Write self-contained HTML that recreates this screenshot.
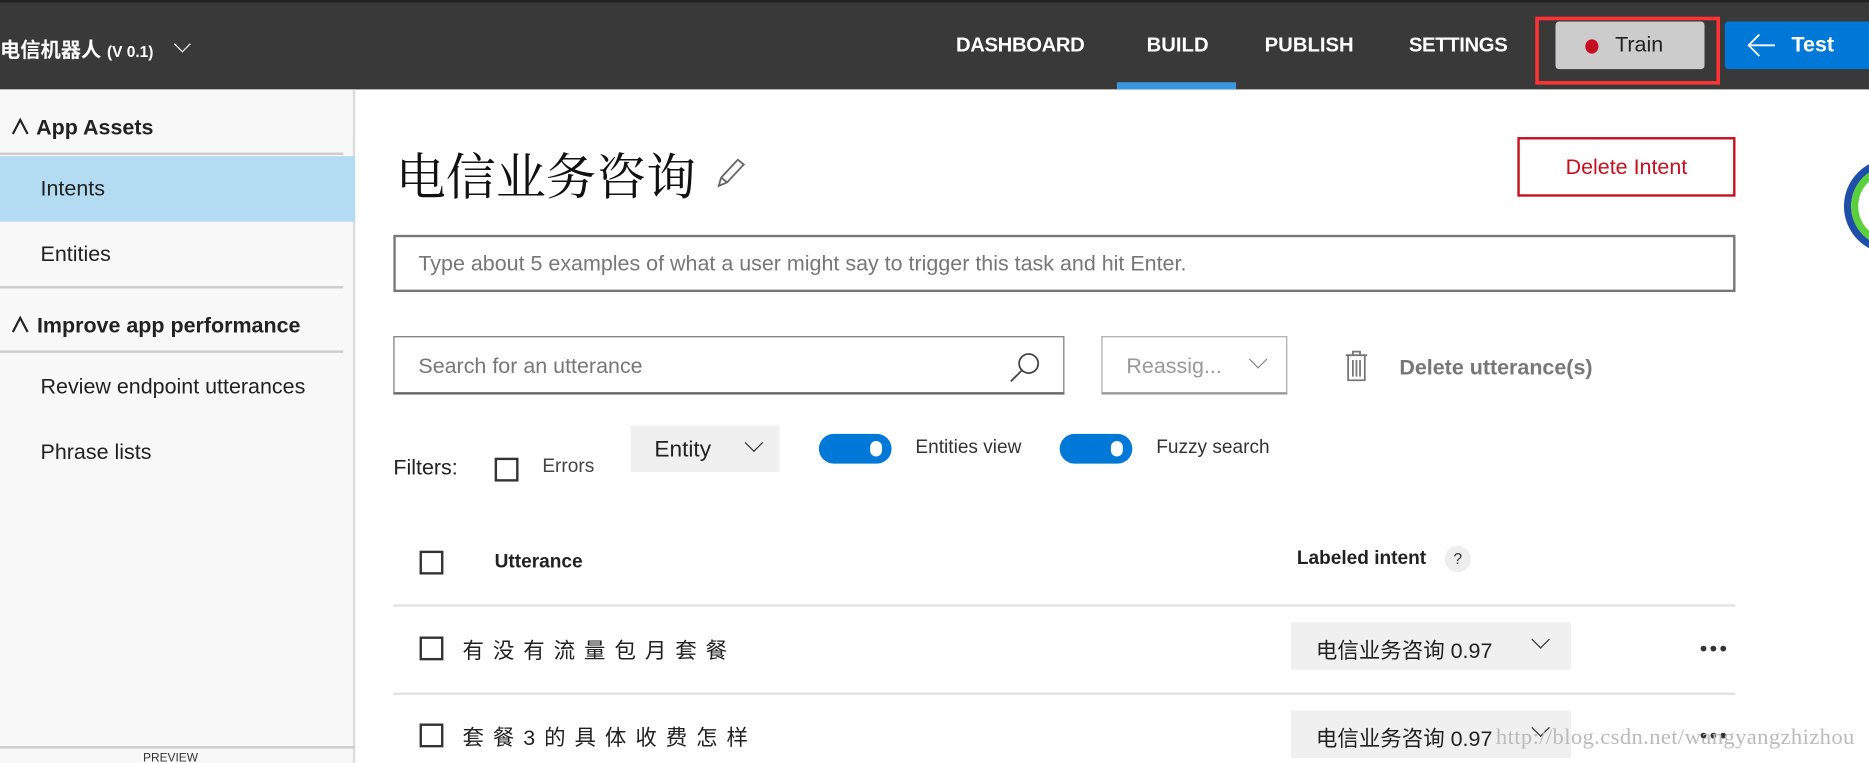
<!DOCTYPE html>
<html><head><meta charset="utf-8"><style>
*{margin:0;padding:0;box-sizing:border-box}
body{width:1869px;height:763px;overflow:hidden;background:#fff;font-family:"Liberation Sans","Noto Sans CJK SC",sans-serif}
#w{position:absolute;left:0;top:0;width:1568px;height:640px;transform:scale(1.19196);transform-origin:0 0;overflow:hidden}
.a{position:absolute;white-space:nowrap}
.top{left:0;top:0;width:1568px;height:75px;background:#393939;border-top:2px solid #222}
.nav{color:#fff;font-size:17px;top:28px;font-weight:600}
.sb{left:0;top:75px;width:298px;height:565px;background:#f8f8f8;border-right:2px solid #ddd}
.si{font-size:18px;color:#222}
.hd{font-weight:700}
.cb{width:20px;height:20px;border:2px solid #333;background:#fff}
.dd{background:#f0f0f0}
.tg{width:61px;height:25px;border-radius:13px;background:#0078d7}
.tg:after{content:"";position:absolute;right:8px;top:6px;width:10px;height:13px;border-radius:6px;background:#fff}
.line{left:330px;width:1126px;height:2px;background:#e3e3e3}
.chev{width:11px;height:11px;border-right:1.5px solid #333;border-bottom:1.5px solid #333;transform:rotate(45deg)}
</style></head><body><div id="w">
<div class="a top"></div>
<div class="a" style="left:0;top:28px;color:#fff;font-size:17px;font-weight:700">电信机器人 <span style="font-size:13px">(V 0.1)</span></div>
<div class="a chev" style="left:148px;top:32px;border-color:#fff;width:10px;height:10px"></div>
<div class="a nav" style="left:802px;letter-spacing:-0.3px">DASHBOARD</div>
<div class="a nav" style="left:962px">BUILD</div>
<div class="a nav" style="left:1061px">PUBLISH</div>
<div class="a nav" style="left:1182px;letter-spacing:-0.3px">SETTINGS</div>
<div class="a" style="left:937px;top:69px;width:100px;height:6px;background:#3a96dd"></div>
<div class="a" style="left:1288px;top:14px;width:155px;height:57px;border:3px solid #f33"></div>
<div class="a" style="left:1305px;top:18px;width:125px;height:40px;background:#ccc;border-radius:3px"></div>
<div class="a" style="left:1330px;top:33px;width:11px;height:12px;border-radius:50%;background:#c50f1f"></div>
<div class="a" style="left:1355px;top:27px;font-size:18px;color:#222">Train</div>
<div class="a" style="left:1447px;top:18px;width:130px;height:40px;background:#0078d7;border-radius:3px"></div>
<svg class="a" style="left:1465px;top:27px" width="26" height="22"><path d="M24 11H3M11 2L2 11l9 9" fill="none" stroke="#fff" stroke-width="1.5"/></svg>
<div class="a" style="left:1503px;top:27px;font-size:18px;color:#fff;font-weight:600">Test</div>

<div class="a sb"></div>
<div class="a" style="left:0;top:128px;width:288px;height:2px;background:#ccc"></div>
<div class="a" style="left:0;top:131px;width:298px;height:55px;background:#b3dcf2"></div>
<div class="a" style="left:0;top:240px;width:288px;height:2px;background:#ccc"></div>
<div class="a" style="left:0;top:294px;width:288px;height:2px;background:#ccc"></div>
<div class="a si hd" style="left:8px;top:93px">∧ App Assets</div>
<div class="a si" style="left:34px;top:148px">Intents</div>
<div class="a si" style="left:34px;top:203px">Entities</div>
<div class="a si hd" style="left:8px;top:259px">∧ Improve app performance</div>
<div class="a si" style="left:34px;top:314px">Review endpoint utterances</div>
<div class="a si" style="left:34px;top:369px">Phrase lists</div>
<div class="a" style="left:0;top:626px;width:298px;height:2px;background:#ccc"></div>
<div class="a" style="left:120px;top:631px;font-size:10px;color:#333">PREVIEW</div>

<div class="a" style="left:332px;top:116px;font-size:42px;color:#111;font-family:'Noto Serif CJK SC',serif">电信业务咨询</div>
<svg class="a" style="left:600px;top:131px" width="26" height="28" viewBox="0 0 26 28"><path d="M3 25l2-7L19 3l5 4-14 15z M5 18l5 4" fill="none" stroke="#666" stroke-width="1.5"/></svg>
<div class="a" style="left:1273px;top:115px;width:183px;height:50px;border:2px solid #c50f1f;color:#c50f1f;font-size:18px;text-align:center;line-height:46px">Delete Intent</div>
<div class="a" style="left:330px;top:197px;width:1126px;height:48px;border:2px solid #777;color:#777;font-size:18px;padding:12px 19px">Type about 5 examples of what a user might say to trigger this task and hit Enter.</div>

<div class="a" style="left:330px;top:282px;width:563px;height:49px;border:1px solid #777;border-bottom:2px solid #666;color:#777;font-size:18px;padding:14px 20px">Search for an utterance</div>
<svg class="a" style="left:845px;top:293px" width="30" height="30"><circle cx="18" cy="12" r="8" fill="none" stroke="#444" stroke-width="1.5"/><path d="M12 18L3 27" stroke="#444" stroke-width="1.5"/></svg>
<div class="a" style="left:924px;top:282px;width:156px;height:49px;border:1px solid #aaa;border-bottom:2px solid #999;color:#999;font-size:18px;padding:14px 20px">Reassig...</div>
<div class="a chev" style="left:1050px;top:296px;border-color:#888"></div>
<svg class="a" style="left:1126px;top:293px" width="24" height="28"><path d="M3 5h18M9 5V2h6v3M5 5v21h14V5M9 9v14M12 9v14M15 9v14" fill="none" stroke="#777" stroke-width="1.5"/></svg>
<div class="a" style="left:1174px;top:298px;font-size:18px;color:#777;font-weight:700">Delete utterance(s)</div>

<div class="a" style="left:330px;top:382px;font-size:18px;color:#222">Filters:</div>
<div class="a cb" style="left:415px;top:384px"></div>
<div class="a" style="left:455px;top:383px;font-size:16px;color:#444">Errors</div>
<div class="a dd" style="left:529px;top:357px;width:125px;height:39px"></div>
<div class="a" style="left:549px;top:367px;font-size:19px;color:#222">Entity</div>
<div class="a chev" style="left:627px;top:366px"></div>
<div class="a tg" style="left:687px;top:364px"></div>
<div class="a" style="left:768px;top:367px;font-size:16px;color:#333">Entities view</div>
<div class="a tg" style="left:889px;top:364px"></div>
<div class="a" style="left:970px;top:367px;font-size:16px;color:#333">Fuzzy search</div>

<div class="a cb" style="left:352px;top:462px"></div>
<div class="a" style="left:415px;top:463px;font-size:16px;font-weight:700;color:#222">Utterance</div>
<div class="a" style="left:1088px;top:460px;font-size:16px;font-weight:700;color:#222">Labeled intent</div>
<div class="a" style="left:1212px;top:458px;width:22px;height:22px;border-radius:50%;background:#eee;font-size:13px;text-align:center;line-height:22px;color:#333">?</div>
<div class="a line" style="top:507px"></div>
<div class="a line" style="top:581px"></div>

<div class="a cb" style="left:352px;top:534px"></div>
<div class="a" style="left:388px;top:532px;font-size:18px;color:#222;letter-spacing:7.5px">有没有流量包月套餐</div>
<div class="a dd" style="left:1083px;top:522px;width:235px;height:40px"></div>
<div class="a" style="left:1104px;top:532px;font-size:18px;color:#222">电信业务咨询 0.97</div>
<div class="a chev" style="left:1287px;top:531px"></div>
<div class="a" style="left:1426px;top:534px;font-size:18px;color:#333;letter-spacing:2px">•••</div>

<div class="a cb" style="left:352px;top:607px"></div>
<div class="a" style="left:388px;top:605px;font-size:18px;color:#222;letter-spacing:7.5px">套餐3的具体收费怎样</div>
<div class="a dd" style="left:1083px;top:596px;width:235px;height:40px"></div>
<div class="a" style="left:1104px;top:606px;font-size:18px;color:#222">电信业务咨询 0.97</div>
<div class="a chev" style="left:1287px;top:605px"></div>
<div class="a" style="left:1426px;top:607px;font-size:18px;color:#333;letter-spacing:2px">•••</div>
<div class="a" style="left:1255px;top:608px;font-size:19px;color:#bbb;font-family:'Liberation Serif',serif;letter-spacing:0.3px">http://blog.csdn.net/wangyangzhizhou</div>

<div class="a" style="left:1547px;top:133px;width:80px;height:80px;border-radius:50%;border:6px solid #1e4fa8;background:#fff"></div>
<div class="a" style="left:1553px;top:139px;width:68px;height:68px;border-radius:50%;border:6px solid #5ad03c"></div>
</div></body></html>
